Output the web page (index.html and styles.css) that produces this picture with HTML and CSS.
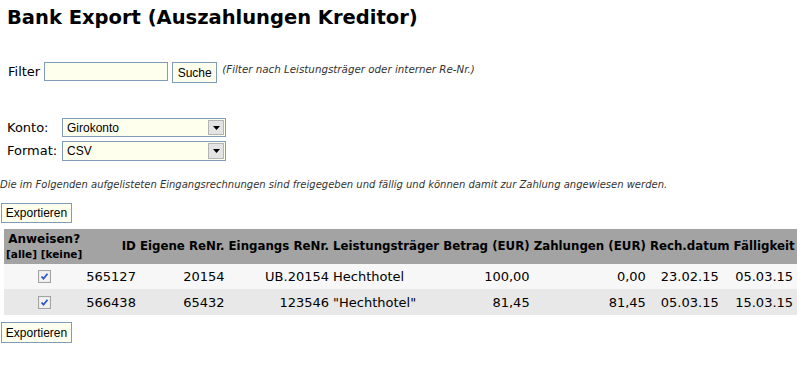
FILE: index.html
```html
<!DOCTYPE html>
<html lang="de">
<head>
    <meta charset="UTF-8">
    <title>Bank Export (Auszahlungen Kreditor)</title>
    <link rel="stylesheet" href="styles.css">
</head>
<body>
<h1 class="title">Bank Export (Auszahlungen Kreditor)</h1>

<form class="filter">
    <label class="filter-label" for="filter">Filter</label>
    <input class="field" type="text" id="filter">
    <button type="button" class="btn btn-search">Suche</button>
    <span class="hint">(Filter nach Leistungsträger oder interner Re-Nr.)</span>
</form>

<div class="options">
    <span class="opt-label">Konto:</span>
    <div class="combo">
        <span class="combo-text">Girokonto</span>
        <span class="combo-arrow"><svg width="7" height="4" viewBox="0 0 7 4"><path d="M0 0h7L3.5 4z" fill="#000"/></svg></span>
    </div>
    <span class="opt-label">Format:</span>
    <div class="combo combo-tall">
        <span class="combo-text">CSV</span>
        <span class="combo-arrow"><svg width="7" height="4" viewBox="0 0 7 4"><path d="M0 0h7L3.5 4z" fill="#000"/></svg></span>
    </div>
</div>

<p class="info">Die im Folgenden aufgelisteten Eingangsrechnungen sind freigegeben und fällig und können damit zur Zahlung angewiesen werden.</p>

<button type="button" class="btn btn-export">Exportieren</button>

<table class="list">
    <thead>
        <tr>
            <th class="c-check">Anweisen?<br><span class="all-none">[alle] [keine]</span></th>
            <th class="r">ID</th>
            <th class="r">Eigene ReNr.</th>
            <th class="r">Eingangs ReNr.</th>
            <th>Leistungsträger</th>
            <th class="r">Betrag (EUR)</th>
            <th class="r">Zahlungen (EUR)</th>
            <th>Rech.datum</th>
            <th>Fälligkeit</th>
        </tr>
    </thead>
    <tbody id="rows"></tbody>
</table>

<button type="button" class="btn btn-export btn-last">Exportieren</button>

<script>
    const invoices = [
        { id: '565127', own: '20154', ext: 'UB.20154', vendor: 'Hechthotel', amount: '100,00', paid: '0,00', date: '23.02.15', due: '05.03.15' },
        { id: '566438', own: '65432', ext: '123546', vendor: '"Hechthotel"', amount: '81,45', paid: '81,45', date: '05.03.15', due: '15.03.15' },
    ];

    const check = '<svg class="check" width="13" height="13" viewBox="0 0 13 13">' +
        '<rect x="0.5" y="0.5" width="12" height="12" fill="#e6e6e6" stroke="#a3a3a3"/>' +
        '<rect x="1.5" y="1.5" width="10" height="10" fill="#f2f2f2"/>' +
        '<path d="M3.5 6.5l2 2.2 4-5" fill="none" stroke="#2c56c8" stroke-width="1.8"/></svg>';

    const tbody = document.getElementById('rows');
    invoices.forEach(inv => {
        const row = document.createElement('tr');
        row.innerHTML = `
            <td class="c-check">${check}</td>
            <td>${inv.id}</td>
            <td class="r">${inv.own}</td>
            <td class="r">${inv.ext}</td>
            <td>${inv.vendor}</td>
            <td class="r">${inv.amount}</td>
            <td class="r">${inv.paid}</td>
            <td class="c">${inv.date}</td>
            <td class="c">${inv.due}</td>
        `;
        tbody.appendChild(row);
    });
</script>
</body>
</html>
```

FILE: styles.css
```css
body { margin: 0; padding: 0; font-family: "DejaVu Sans", Verdana, sans-serif; font-size: 13px; color: #000; background: #fff; }
.title { margin: 6px 0 0 7px; font-size: 19.5px; line-height: 24px; font-weight: bold; }

.filter { display: flex; align-items: flex-start; margin: 32px 0 0 0; }
.filter-label { padding: 2px 4px 0 8px; line-height: 16px; }
.field { box-sizing: border-box; width: 124px; height: 19px; margin: 0; border: 1px solid #7f9db9; background: #ffffee; padding: 1px 3px; font: 12px "Liberation Sans", Arial, sans-serif; }
.btn { box-sizing: border-box; margin: 0; border: 1px solid #7f9db9; background: #ffffee; color: #000; padding: 0 6px; font: 12px "Liberation Sans", Arial, sans-serif; cursor: pointer; }
.btn-search { width: 45px; height: 21px; margin-left: 4px; padding: 0; }
.hint { margin: 1px 0 0 5px; font-size: 10.3px; font-style: italic; color: #333; }

.options { display: grid; grid-template-columns: 55px 164px; row-gap: 4px; align-items: center; margin-top: 35px; padding-left: 7px; }
.opt-label { line-height: 16px; }
.combo { box-sizing: border-box; display: flex; align-items: center; height: 19px; border: 1px solid #7f9db9; background: #ffffee; padding: 1px; }
.combo-tall { height: 20px; }
.combo-text { flex: 1; padding-left: 3px; font: 12px "Liberation Sans", Arial, sans-serif; }
.combo-arrow { box-sizing: border-box; display: flex; align-items: center; justify-content: center; width: 16px; height: 100%; background: #e4e4e4; border: 1px solid #b4b4b4; }

.info { margin: 18px 0 0 0; font-size: 10px; line-height: 12px; font-style: italic; color: #333; }

.btn-export { display: block; height: 20px; margin: 12px 0 0 1px; width: 71px; padding: 0; }
.btn-last { height: 21px; margin-top: 7px; }

.list { border-collapse: collapse; margin: 6px 0 0 4px; }
.list th, .list td { padding: 0 2px; white-space: nowrap; }
.list th { background: #a3a3a3; height: 34px; font-size: 11.8px; font-weight: bold; text-align: left; vertical-align: middle; line-height: 15px; }
.list th.c-check { text-align: center; padding-top: 1px; font-size: 12px; }
.all-none { font-size: 10.5px; line-height: 14px; }
.list td { height: 25px; }
.list tbody tr:nth-child(odd) { background: #f7f7f7; }
.list tbody tr:nth-child(even) { background: #e8e8e8; }
.list tbody tr:nth-child(even) td { height: 26px; }
.list .r { text-align: right; }
.list .c { text-align: center; }
.list td.c-check { text-align: center; }
.check { display: block; margin: 0 auto; }
```
